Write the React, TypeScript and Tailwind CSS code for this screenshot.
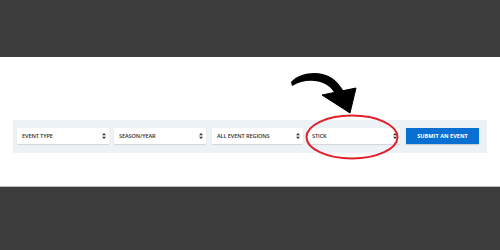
const font = { fontFamily: '"Open Sans", "Liberation Sans", sans-serif' }

function Chevrons() {
  return (
    <svg width="4" height="6" viewBox="0 0 4 6" className="shrink-0">
      <path d="M2 0 L4 2.2 L0 2.2 Z" fill="#333" />
      <path d="M2 6 L4 3.8 L0 3.8 Z" fill="#333" />
    </svg>
  )
}

function Select({ label, width }: { label: string; width: string }) {
  return (
    <div
      className={`${width} h-[16px] bg-white rounded-[1px] flex items-center justify-between pl-[5px] pr-[3px] shadow-[0_1px_1px_rgba(0,0,0,0.12)]`}
    >
      <span className="text-[5.6px] font-semibold text-[#2b2f33] tracking-[-0.1px]">{label}</span>
      <Chevrons />
    </div>
  )
}

export default function App() {
  return (
    <div className="relative w-[500px] h-[250px] overflow-hidden bg-[#3d3d3d]" style={font}>
      <div className="h-[57px]" />
      <div className="h-[129px] bg-white pt-[63px] px-[13px]">
        <div className="h-[33px] bg-[#edf2f7] flex items-start pt-[8px] pl-[4px]">
          <Select label="EVENT TYPE" width="w-[92px]" />
          <div className="w-[5px]" />
          <Select label="SEASON/YEAR" width="w-[92px]" />
          <div className="w-[6px]" />
          <Select label="ALL EVENT REGIONS" width="w-[91px]" />
          <div className="w-[4px]" />
          <Select label="STICK" width="w-[93px]" />
          <div className="w-[6px]" />
          <div className="w-[73px] h-[16px] bg-[#0a6fd2] flex items-center justify-center shadow-[0_1px_1px_rgba(0,0,0,0.15)]">
            <span className="text-[5.6px] font-bold text-white">SUBMIT AN EVENT</span>
          </div>
        </div>
      </div>
      <div className="h-[1px] bg-[#bdbdbd]" />

      {/* annotation overlay */}
      <svg className="absolute left-0 top-0" width="500" height="250" viewBox="0 0 500 250">
        <path
          d="M291 82 C300 72 320 70 332 78 C340 84 345 92 347 99 L338 100 C335 92 331 87 325 84 C315 79 302 80 292 86 Z"
          fill="#000"
        />
        <path d="M322 95 L356 88 L350 113 Z" fill="#000" strokeLinejoin="round" stroke="#000" strokeWidth="1" />
        <ellipse cx="352" cy="137" rx="45.5" ry="21.5" fill="none" stroke="#e0202a" strokeWidth="2" />
      </svg>
    </div>
  )
}
